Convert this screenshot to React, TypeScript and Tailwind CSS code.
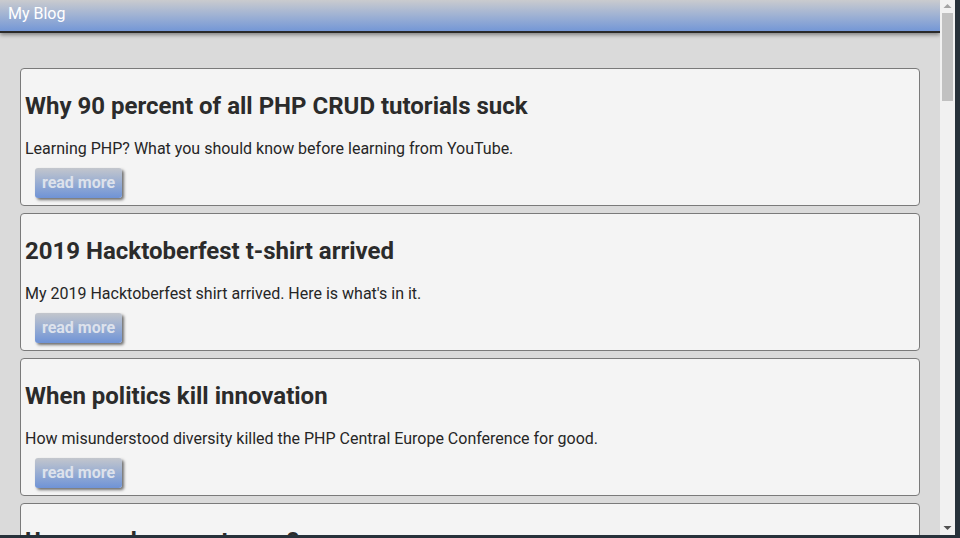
import React from "react";

const posts = [
  {
    title: "Why 90 percent of all PHP CRUD tutorials suck",
    desc: "Learning PHP? What you should know before learning from YouTube.",
  },
  {
    title: "2019 Hacktoberfest t-shirt arrived",
    desc: "My 2019 Hacktoberfest shirt arrived. Here is what's in it.",
  },
  {
    title: "When politics kill innovation",
    desc: "How misunderstood diversity killed the PHP Central Europe Conference for good.",
  },
  {
    title: "Unmerged scores to use?",
    desc: "What happens to the code that never makes it.",
  },
];

export default function App() {
  return (
    <div className="w-[960px] h-[538px] overflow-hidden bg-[#27313a] font-['Roboto',sans-serif]">
      <div className="flex w-[955px] h-[535px]">
        <div className="relative flex-1 min-w-0 bg-[#dadada] overflow-hidden">
          <div className="h-[33px] bg-gradient-to-b from-[#cacbce] to-[#7497d6] border-b-2 border-[#2a2a2a] shadow-[0_2px_4px_rgba(0,0,0,0.4)] flex items-start pl-[8px] pt-[4px]">
            <span className="text-white text-[16px] leading-[20px]">My Blog</span>
          </div>
          <div className="flex flex-col gap-[7px] px-[20px] pt-[35px]">
            {posts.map((p) => (
              <div
                key={p.title}
                className="shrink-0 h-[138px] bg-[#f4f4f4] border border-[#7a7a7a] rounded-[4px] pl-[4px] pt-[21px]"
              >
                <h2 className="text-[24px] leading-[32px] font-bold text-[#2b2b2b]">{p.title}</h2>
                <p className="mt-[16px] text-[16px] leading-[22px] text-[#262626]">{p.desc}</p>
                <div className="mt-[8px] ml-[10px]">
                  <span className="inline-flex items-center justify-center w-[87px] h-[30px] rounded-[3px] bg-gradient-to-b from-[#c3c6cc] to-[#6f93d6] shadow-[2px_2px_3px_rgba(0,0,0,0.55)] text-[16px] font-bold text-[#dde2ec]">
                    read more
                  </span>
                </div>
              </div>
            ))}
          </div>
        </div>
        <div className="w-[15px] bg-[#f1f1f1] flex flex-col items-center">
          <svg width="15" height="12" viewBox="0 0 15 12" className="shrink-0">
            <polygon points="3.5,8 7.5,4 11.5,8" fill="#a3a3a3" />
          </svg>
          <div className="w-[11px] h-[88px] bg-[#c1c1c1] mt-[1px]" />
          <div className="flex-1" />
          <svg width="15" height="12" viewBox="0 0 15 12" className="shrink-0 mb-[2px]">
            <polygon points="3.5,5 11.5,5 7.5,9" fill="#505050" />
          </svg>
        </div>
      </div>
    </div>
  );
}
